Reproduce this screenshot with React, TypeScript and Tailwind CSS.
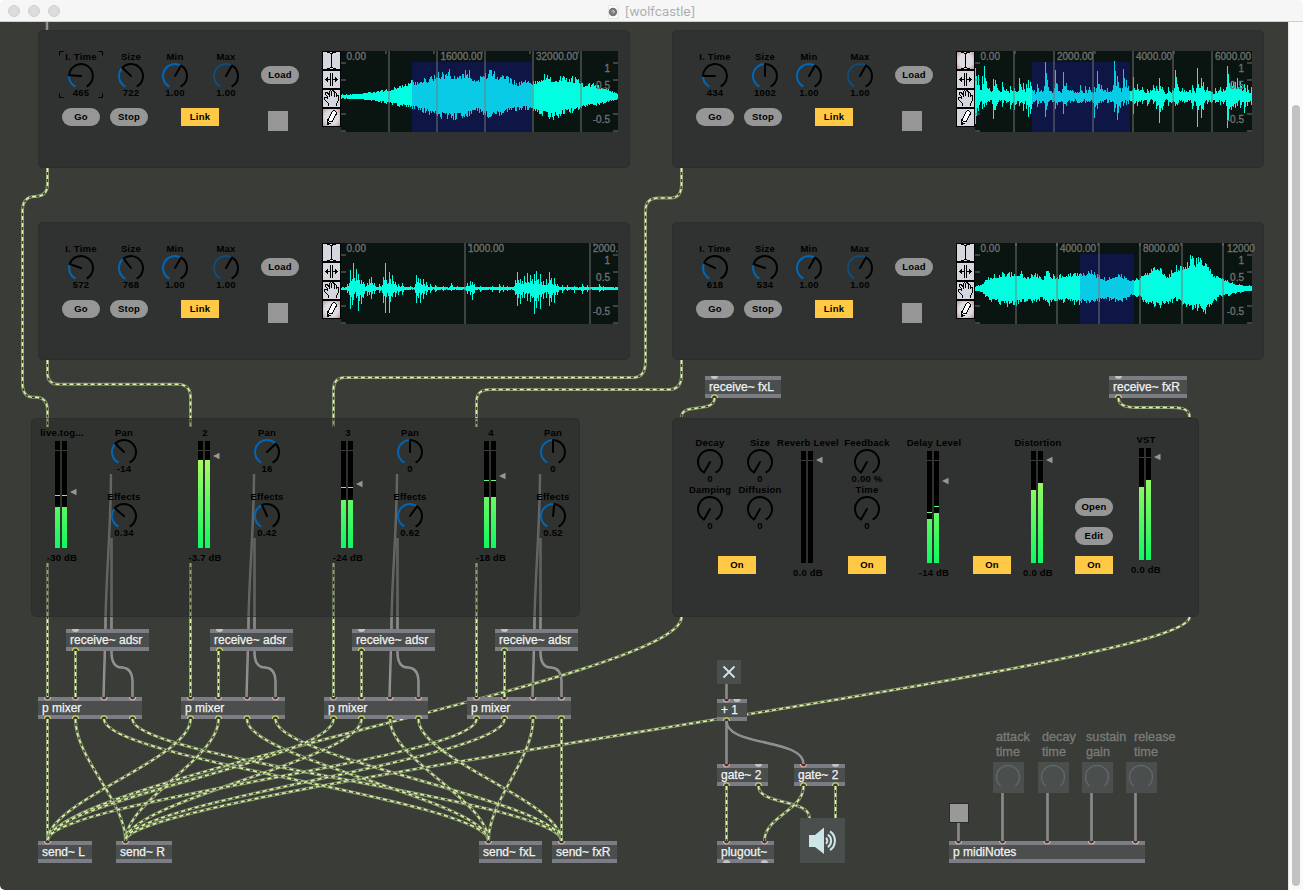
import React from "react";

const label = "font-['Liberation_Sans',Arial,sans-serif] text-[9.5px] font-bold leading-[12px] tracking-[0.22px] text-black whitespace-nowrap";

function polar(cx: number, cy: number, r: number, deg: number): [number, number] {
  const a = (deg * Math.PI) / 180;
  return [cx + r * Math.sin(a), cy - r * Math.cos(a)];
}

function arc(cx: number, cy: number, r: number, from: number, to: number) {
  const [x0, y0] = polar(cx, cy, r, from);
  const [x1, y1] = polar(cx, cy, r, to);
  return `M${x0} ${y0}A${r} ${r} 0 ${to - from > 180 ? 1 : 0} 1 ${x1} ${y1}`;
}

type DialProps = { at: string; name: string; value: string; angle: number; dim?: boolean; focus?: boolean };

function Dial({ at, name, value, angle, dim, focus }: DialProps) {
  const [nx, ny] = polar(14, 14, 12, angle);
  return (
    <div className={`absolute flex w-[60px] flex-col items-center ${label} ${at}`}>
      <span className="relative top-px">{name}</span>
      <svg width="28" height="28" viewBox="0 0 28 28" fill="none" strokeWidth="2" className="shrink-0">
        <path d={arc(14, 14, 12, Math.max(-152, angle - 2), 152)} stroke="#000" />
        {angle > -150 && <path d={arc(14, 14, 12, -152, angle)} stroke={dim ? "#0e4c7c" : "#0067b8"} />}
        <path d={`M14 14L${nx} ${ny}`} stroke="#000" strokeWidth="2" strokeLinecap="round" />
      </svg>
      <span className="-mt-[3px]">{value}</span>
      {focus && (
        <svg className="absolute left-[8px] top-px" width="44" height="47" viewBox="0 0 44 47" fill="none" stroke="#000">
          <path d="M.5 4.500V.5H4.500M39.500 .5H43.500V4.500M.5 42.500V46.500H4.500M39.500 46.500H43.500V42.500" />
        </svg>
      )}
    </div>
  );
}

function Pill({ at, children }: { at: string; children: string }) {
  return (
    <button className={`absolute flex h-[18px] w-[38px] items-center justify-center rounded-full bg-[#969696] ${label} ${at}`}>
      {children}
    </button>
  );
}

function Toggle({ at, children }: { at: string; children: string }) {
  return (
    <button className={`absolute flex h-[18px] w-[38px] items-center justify-center bg-[#ffc845] ${label} ${at}`}>
      {children}
    </button>
  );
}

type MeterProps = {
  at: string;
  name: string;
  db: string;
  height: number;
  levels?: [number, number];
  peaks?: [number, number];
  slider: number;
};

function Meter({ at, name, db, height, levels, peaks, slider }: MeterProps) {
  const id = React.useId();
  return (
    <div className={`absolute flex w-[70px] flex-col items-center ${label} ${at}`}>
      <span>{name}</span>
      <svg className="mt-[2px] shrink-0" width="70" height={height} viewBox={`0 0 70 ${height}`}>
        <defs>
          <linearGradient id={id} gradientUnits="userSpaceOnUse" x1="0" x2="0" y1="0" y2={height}>
            <stop offset="0" stopColor="#cbf962" />
            <stop offset="1" stopColor="#10f862" />
          </linearGradient>
        </defs>
        {[28, 35].map((x, i) => (
          <g key={x}>
            <rect x={x} y="0" width="5" height={height} fill="#000" />
            <rect x={x} y="9" width="5" height="1" fill="#3b3b3b" />
            {levels && <rect x={x} y={levels[i]} width="5" height={height - levels[i]} fill={`url(#${id})`} />}
            {peaks && <rect x={x} y={peaks[i]} width="5" height="1" fill="#6dfb80" />}
          </g>
        ))}
        <path d={`M43 ${slider}l6.500 -3.300v6.600z`} fill="#979797" />
      </svg>
      <span className="mt-[4px]">{db}</span>
    </div>
  );
}

/* ---------- waveform~ ---------- */

type Pt = [number, number, number];
type Wave = {
  kind: "body" | "spikes";
  base: number;
  tail: number;
  pts: Pt[];
  sel?: [number, number];
  grid: number[];
  ticks: number[];
  times: [number, string][];
};

const toPts = (o: number, raw: number[][]): Pt[] => raw.map(([x, t, b]) => [(x - o) / 3, t, b]);

const waves: Wave[] = [
  {
    kind: "body",
    base: 1,
    tail: 0,
    pts: [
      [0, 1.5, 1.5], [19, 2.5, 2.5], [36, 5, 5], [49, 7, 7], [59, 11, 10], [69, 15, 11], [79, 15, 14], [89, 19, 18],
      [97, 24, 20], [104, 24, 21], [107, 29, 21], [110, 23, 22], [116, 22, 22], [127, 25, 20], [136, 16, 15],
      [143, 22, 18], [150, 26, 21], [156, 22, 20], [162, 20, 17], [175, 14, 13], [189, 15, 12], [196, 16, 16],
      [205, 23, 20], [211, 19, 22], [222, 20, 17], [236, 18, 14], [242, 12, 11], [252, 13, 9], [262, 8, 7],
      [270, 6, 4], [277, 2, 2],
    ],
    sel: [71, 191],
    grid: [47, 95, 143, 191, 239],
    ticks: [44, 92, 140, 188, 236],
    times: [[5.5, "0.00"], [99.500, "16000.00"], [195, "32000.00"]],
  },
  {
    kind: "spikes",
    base: 5,
    tail: 2.6,
    pts: toPts(45, [
      [45, 28, 27], [55, 21, 14], [65, 20, 12], [73, 30, 10], [79, 15, 8], [88, 8, 5], [100, 17, 22], [105, 16, 13],
      [112, 8, 7], [125, 14, 10], [138, 7, 6], [150, 10, 12], [163, 8, 13], [178, 18, 9], [190, 13, 14], [197, 12, 12],
      [205, 16, 20], [211, 14, 17], [230, 12, 10], [242, 6, 6], [256, 34, 20], [262, 12, 9], [285, 26, 12],
      [292, 12, 8], [308, 24, 17], [318, 13, 9], [335, 6, 4], [360, 11, 5], [375, 10, 6], [388, 9, 5], [402, 9, 21],
      [412, 25, 12], [424, 11, 6], [440, 8, 6], [463, 35, 15], [470, 20, 23], [480, 8, 11], [490, 27, 9],
      [498, 16, 8], [504, 10, 7], [519, 19, 17], [530, 12, 9], [545, 9, 7], [560, 7, 9], [580, 11, 7], [588, 10, 12],
      [597, 18, 26], [605, 9, 13], [625, 9, 9], [645, 26, 9], [652, 12, 8], [665, 8, 5], [695, 11, 12],
      [712, 28, 30], [722, 18, 21], [730, 14, 13], [742, 9, 7], [765, 8, 6], [780, 9, 8], [790, 7, 7],
      [802, 30, 31], [808, 13, 12], [814, 15, 13], [820, 15, 10], [826, 14, 11], [832, 18, 9], [841, 14, 11],
      [852, 12, 16], [862, 11, 9], [873, 9, 8],
    ]),
    sel: [57, 155],
    grid: [38, 78, 117, 157, 197, 236],
    ticks: [39, 119, 198],
    times: [[5.5, "0.00"], [82, "2000.00"], [161, "4000.00"], [240, "6000.00"]],
  },
  {
    kind: "spikes",
    base: 1,
    tail: 1.6,
    pts: toPts(93, [
      [112, 4, 4], [120, 18, 20], [125, 9, 16], [130, 25, 11], [137, 19, 9], [145, 14, 22], [152, 8, 15], [160, 6, 9],
      [170, 5, 7], [176, 9, 6], [182, 11, 10], [192, 5, 5], [207, 4, 4], [218, 11, 14], [226, 25, 24], [237, 16, 24],
      [247, 13, 8], [255, 6, 8], [265, 4, 6], [275, 5, 6], [300, 2, 1], [319, 13, 14], [325, 10, 9], [331, 9, 14],
      [340, 9, 10], [347, 6, 6], [360, 4, 4], [375, 3, 3], [400, 2, 2], [422, 5, 2], [440, 2, 1], [471, 5, 5],
      [479, 7, 6], [485, 6, 11], [492, 4, 4], [510, 2, 3], [545, 2, 3], [568, 4, 4], [578, 3, 3], [590, 2, 2],
      [614, 8, 6], [622, 16, 17], [631, 9, 15], [637, 7, 9], [643, 12, 9], [652, 15, 12], [660, 13, 13], [666, 9, 9],
      [673, 14, 25], [678, 17, 19], [685, 9, 12], [691, 14, 20], [700, 7, 10], [708, 9, 9], [716, 16, 17],
      [724, 10, 13], [733, 10, 14], [742, 4, 6], [755, 3, 4], [770, 3, 2], [792, 2, 4], [816, 4, 5], [830, 3, 3],
      [868, 4, 3], [880, 2, 2],
    ]),
    grid: [123, 248],
    ticks: [127, 252],
    times: [[5.5, "0.00"], [127, "1000.00"], [252, "2000."]],
  },
  {
    kind: "body",
    base: 1,
    tail: 0,
    pts: toPts(45, [
      [45, 2, 2], [65, 3, 3], [75, 9, 8], [90, 12, 12], [110, 13, 14], [130, 16, 16], [160, 15, 17], [180, 17, 14],
      [200, 11, 13], [222, 16, 14], [245, 9, 11], [262, 18, 17], [275, 13, 14], [290, 12, 13], [320, 15, 13],
      [350, 16, 16], [362, 14, 14], [386, 20, 16], [410, 13, 13], [440, 9, 10], [475, 16, 14], [495, 11, 11],
      [515, 9, 6], [540, 11, 9], [560, 16, 16], [595, 24, 18], [620, 12, 16], [645, 21, 11], [670, 25, 17],
      [684, 27, 20], [694, 36, 21], [700, 27, 22], [718, 36, 20], [735, 26, 24], [755, 16, 16], [775, 11, 9],
      [800, 8, 7], [830, 4, 4], [875, 2, 2],
    ]),
    sel: [105, 159],
    grid: [40, 81, 123, 164, 206, 247],
    ticks: [40, 81, 122, 164, 205, 247],
    times: [[5.5, "0.00"], [85, "4000.00"], [168, "8000.00"], [252, "12000"]],
  },
];

function wavePath(w: Wave, seed: number) {
  let s = seed;
  const rnd = () => {
    s = (s * 16807) % 2147483647;
    return s / 2147483647;
  };
  const w0 = 277;
  const top = new Array(w0).fill(0);
  const bot = new Array(w0).fill(0);
  if (w.kind === "body") {
    for (let x = 0; x < w0; x++) {
      let i = 0;
      while (i < w.pts.length - 2 && w.pts[i + 1][0] < x) i++;
      const [a, t0, b0] = w.pts[i];
      const [b, t1, b1] = w.pts[i + 1];
      const k = Math.min(1, Math.max(0, (x - a) / (b - a)));
      top[x] = (t0 + (t1 - t0) * k) * (0.72 + 0.36 * rnd() ** 1.6);
      bot[x] = (b0 + (b1 - b0) * k) * (0.72 + 0.36 * rnd() ** 1.6);
    }
  } else {
    for (let x = 0; x < w0; x++) {
      top[x] = w.base * (0.4 + 0.8 * rnd());
      bot[x] = w.base * (0.4 + 0.8 * rnd());
    }
    w.pts.forEach(([px, t, b]) => {
      const p = Math.round(px);
      for (let x = Math.max(0, p - 1); x < Math.min(w0, p + 6); x++) {
        const d = x === p ? 1 : x < p ? 0.3 : Math.exp(-(x - p) / w.tail) * (0.6 + 0.5 * rnd());
        top[x] = Math.max(top[x], t * d);
        bot[x] = Math.max(bot[x], b * d);
      }
    });
  }
  let d = "";
  for (let x = 0; x < w0; x++) {
    const y0 = 45 - Math.round(top[x]);
    const y1 = 46 + Math.round(bot[x]);
    d += `M${x} ${y0}h1V${y1}h-1z`;
  }
  return d;
}

const paths = waves.map((w, i) => wavePath(w, 4211 + i * 977));

function Waveform({ index }: { index: number }) {
  const w = waves[index];
  return (
    <svg
      className="block overflow-visible font-['Liberation_Sans',Arial,sans-serif] text-[10px]"
      width="281"
      height="81"
      viewBox="0 0 281 81"
      shapeRendering="crispEdges"
    >
      <rect width="277" height="81" fill="#0a1511" />
      {w.sel && <rect x={w.sel[0]} y="11" width={w.sel[1] - w.sel[0]} height="70" fill="#0d1644" />}
      <path d={paths[index]} fill="#00ffe1" />
      {w.sel && (
        <svg x={w.sel[0]} y="11" width={w.sel[1] - w.sel[0]} height="70" viewBox={`${w.sel[0]} 11 ${w.sel[1] - w.sel[0]} 70`}>
          <path d={paths[index]} fill="#09cbe6" />
        </svg>
      )}
      <g fill="#787878" fillOpacity="0.48">
        {w.grid.map((x) => (
          <rect key={x} x={x} y="0" width="2" height="81" />
        ))}
        {w.ticks.map((x) => (
          <rect key={x} x={x} y="0" width="2" height="3" />
        ))}
        {[11, 28, 62, 79].map((y) => (
          <g key={y}>
            <rect x="0" y={y} width="5" height="2" />
            <rect x="272" y={y} width="5" height="2" />
          </g>
        ))}
      </g>
      <g fill="#6e706e" stroke="#6e706e" strokeWidth="0.35">
        {w.times.map(([x, t]) => (
          <text key={t} x={x} y="9">
            {t}
          </text>
        ))}
        <g textAnchor="end">
          <text x="269" y="21">1</text>
          <text x="269" y="38">0.5</text>
          <text x="269" y="72">-0.5</text>
        </g>
      </g>
    </svg>
  );
}

const toolIcons = [
  <path key="i" fill="none" stroke="#000" d="M5 1.500H8M8 2.500H9M12 1.500H9.500M9.500 2V17M5 17.500H8M8 16.500H11M11 17.500H14M11 1.500H14M10 2.500H11" />,
  <path key="a" fill="none" stroke="#000" d="M8.500 3V16M10.500 3V16M3 9.500H8M11 9.500H16M4.500 8V11M5.500 7V12M14.500 8V11M13.500 7V12" />,
  <path
    key="h"
    fill="none"
    stroke="#000"
    d="M6.500 17V14.500L2.500 10.500V8.500H4.500L5.500 9.500V7.500L3.500 5.500V3.500H5.500L7.500 7V2.500L8.500 1.500L9.500 2.500V7M9.500 2.500L10.500 1.500L12.500 2.500V7.500M12.500 4.500L13.500 3.500L14.500 4.500V8M14.500 6.500H16.500V11.500L14.500 14.500V17"
  />,
  <path key="p" fill="#fff" stroke="#000" d="M10.500 3.500L11.500 2.500H12.500L14.500 4.500V5.500L9.500 14.500L6.500 16.500H5.500V12.500ZM6.500 12.500L9.500 14.500M5.500 14.500H6.500V15.500" />,
];

function Tools({ active }: { active: number }) {
  return (
    <div className="flex h-[76px] w-[19px] flex-col">
      {toolIcons.map((icon, i) => (
        <div
          key={i}
          className={
            i === active
              ? "size-[19px] bg-[radial-gradient(circle,#dcdce2_50%,#c48f8f_90%)]"
              : "size-[19px] bg-[#d6d6de]"
          }
        >
          <svg width="19" height="19" viewBox="0 0 19 19" shapeRendering="crispEdges" className="block">
            {icon}
            <rect x="0.500" y="0.500" width="18" height="18" fill="none" stroke="#000" />
          </svg>
        </div>
      ))}
    </div>
  );
}

type GrainProps = { at: string; index: number; time: [string, number]; size: [string, number]; tool: number; focus?: boolean };

function Grain({ at, index, time, size, tool, focus }: GrainProps) {
  return (
    <section className={`absolute h-[138px] w-[592px] rounded-[5px] border border-[#2c2e2d] bg-[#303231] ${at}`}>
      <div className="absolute -inset-px">
        <Dial at="left-[13px] top-[20px]" name="I. Time" value={time[0]} angle={time[1]} focus={focus} />
        <Dial at="left-[63px] top-[20px]" name="Size" value={size[0]} angle={size[1]} />
        <Dial at="left-[107px] top-[20px]" name="Min" value="1.00" angle={30} />
        <Dial at="left-[158px] top-[20px]" name="Max" value="1.00" angle={30} dim />
        <Pill at="left-[223px] top-[36px]">Load</Pill>
        <Pill at="left-[24px] top-[78px]">Go</Pill>
        <Pill at="left-[72px] top-[78px]">Stop</Pill>
        <Toggle at="left-[143px] top-[78px]">Link</Toggle>
        <button className="absolute left-[230px] top-[81px] size-[20px] bg-[#969696]" />
        <div className="absolute left-[284px] top-[21px] flex">
          <Tools active={tool} />
          <Waveform index={index} />
        </div>
      </div>
    </section>
  );
}

/* ---------- patch objects ---------- */

type ObjProps = { at: string; width: number; text: string; ins?: number[]; idleIns?: number[]; outs?: number[]; idleOuts?: number[] };

function Obj({ at, width, text, ins = [], idleIns = [], outs = [], idleOuts = [] }: ObjProps) {
  return (
    <div
      className={`absolute h-[22px] border-y-4 border-[#7c7d84] bg-[#4a4e4d] pl-1 font-['Liberation_Sans',Arial,sans-serif] text-[12px] leading-[14px] whitespace-nowrap text-[#f2f2f2] [-webkit-text-stroke:0.25px_#f2f2f2] ${at}`}
    >
      {text}
      <svg className="absolute left-0 -top-1" width={width} height="22" viewBox={`0 0 ${width} 22`}>
        {ins.map((x) => (
          <path key={x} d={`M${x - 3} 0A3 3 0 0 0 ${x + 3} 0`} fill="#3a3b38" stroke="#e9a9a0" strokeWidth="1.200" />
        ))}
        {idleIns.map((x) => (
          <path key={x} d={`M${x - 3.500} 0A3.500 3 0 0 0 ${x + 3.500} 0z`} fill="#c4c4c4" />
        ))}
        {outs.map((x) => (
          <path key={x} d={`M${x - 3} 22A3 3.200 0 0 1 ${x + 3} 22`} fill="#3a3b38" stroke="#c9d563" strokeWidth="1.200" />
        ))}
        {idleOuts.map((x) => (
          <path key={x} d={`M${x - 3.500} 22A3.500 3 0 0 1 ${x + 3.500} 22z`} fill="#c4c4c4" />
        ))}
      </svg>
    </div>
  );
}

function Knob({ at }: { at: string }) {
  return (
    <svg className={`absolute ${at}`} width="31" height="31" viewBox="0 0 31 31" fill="none">
      <rect width="31" height="31" fill="#4a4e4d" />
      <path d={arc(15, 15, 11.5, -140, 140)} stroke="#606568" strokeWidth="1.500" />
    </svg>
  );
}

function Comment({ at, children }: { at: string; children: React.ReactNode }) {
  return (
    <p className={`absolute font-['Liberation_Sans',Arial,sans-serif] text-[12.7px] leading-[15px] whitespace-nowrap text-[#7b7c79] [-webkit-text-stroke:0.3px_#7b7c79] ${at}`}>
      {children}
    </p>
  );
}

/* ---------- patch cords ---------- */

function hang(x0: number, y0: number, x1: number, y1: number, k = 0.33) {
  const dy = (y1 - y0) * k;
  return `M${x0} ${y0}C${x0} ${y0 + dy} ${x1} ${y1 - dy} ${x1} ${y1}`;
}

const strips = [0, 143, 286, 429];

const signals: string[] = [
  "M47.500 168V184C47.500 192 44 196 36 196.500H34C26 197 22.500 202 22.500 211V383C22.500 392 26 397.300 33 397.300H36C44 397.500 47.500 402 47.500 411V427",
  "M47.500 360V373C47.500 380 51 384.300 58 384.300H178C186 384.300 190.500 389 190.500 397V427",
  "M681.500 168V184C681.500 193 678 198 671 198H658C650 198 645.500 202 645.500 211V361C645.500 371 642 377.400 634 377.400H345C338 377.400 333.500 381 333.500 390V427",
  "M681.500 360V375C681.500 384 678 389.400 669 389.400H490C481 389.400 476.500 393 476.500 402V427",
  "M714.500 398C714.500 414 681.500 402 681.500 417",
  "M1118.500 398C1118.500 405 1125 407.500 1136 407.500H1165C1180 407 1189.500 408 1189.500 417",
  ...strips.map((o) => `M${47.5 + o} 563V697`),
  "M75.500 651V697",
  "M218.500 651V697",
  "M361.500 651V697",
  "M504.500 651V697",
  hang(681.5, 617, 47.5, 841, 0.27),
  hang(1189.5, 617, 125.5, 841, 0.23),
  ...strips.flatMap((o) => [
    hang(47.5 + o, 719, 47.5, 841),
    hang(75.5 + o, 719, 125.5, 841),
    hang(104 + o, 719, 488.5, 841),
    hang(132.5 + o, 719, 561.5, 841),
  ]),
  "M726.500 786V841",
  hang(758.5, 786, 809.5, 818, 0.6),
  hang(803.5, 786, 764.5, 841, 0.45),
  "M835.500 786V818",
];

const controls: string[] = [
  "M47 22V30",
  ...strips.flatMap((o) => [
    `M${111 + o} 474C${111 + o} 530 ${105 + o} 590 ${105.5 + o} 629L${103.5 + o} 697`,
    `M${111.5 + o} 538V652C${111.5 + o} 662 ${115 + o} 667.500 ${122 + o} 667.500C${129 + o} 668 ${132.5 + o} 673 ${132.5 + o} 682V697`,
  ]),
  "M726.500 684V699",
  "M726.500 721V764",
  hang(726.5, 721, 803.5, 764, 0.6),
  "M958.500 823V841",
  "M1002.500 793V841",
  "M1047.500 793V841",
  "M1091.500 793V841",
  "M1135.500 793V841",
];

function Cords() {
  return (
    <svg className="absolute inset-0" width="1288" height="868" viewBox="0 22 1288 868" fill="none">
      {controls.map((d, i) => (
        <g key={i}>
          <path d={d} stroke="#999" strokeWidth="2.400" />
          <path d={d} stroke="#858585" strokeWidth="0.800" />
        </g>
      ))}
      {signals.map((d, i) => (
        <g key={i}>
          <path d={d} stroke="#8b9876" strokeWidth="3" />
          <path d={d} stroke="#383b2c" strokeWidth="1.200" />
          <path d={d} stroke="#d7fa9c" strokeWidth="1.500" strokeDasharray="4 3" />
        </g>
      ))}
    </svg>
  );
}

function MixerPanel() {
  return (
    <section className="absolute left-[31px] top-[396px] h-[199px] w-[549px] rounded-[5px] border border-[#2c2e2d]/60 bg-[#212424]/40">
      <div className="absolute -inset-px">
        <Meter at="left-[-4px] top-[9px]" name="live.tog..." db="-30 dB" height={107} levels={[66, 66]} peaks={[54, 54]} slider={51} />
        <Meter at="left-[139px] top-[9px]" name="2" db="-3.7 dB" height={107} levels={[19, 19]} slider={15} />
        <Meter at="left-[282px] top-[9px]" name="3" db="-24 dB" height={107} levels={[59, 59]} peaks={[46, 46]} slider={43} />
        <Meter at="left-[425px] top-[9px]" name="4" db="-18 dB" height={107} levels={[56, 56]} peaks={[39, 39]} slider={35} />
        <Dial at="left-[63px] top-[8px]" name="Pan" value="-14" angle={-46} />
        <Dial at="left-[206px] top-[8px]" name="Pan" value="16" angle={47} />
        <Dial at="left-[349px] top-[8px]" name="Pan" value="0" angle={0} />
        <Dial at="left-[492px] top-[8px]" name="Pan" value="0" angle={0} />
        <Dial at="left-[63px] top-[72px]" name="Effects" value="0.34" angle={-50} />
        <Dial at="left-[206px] top-[72px]" name="Effects" value="0.42" angle={-24} />
        <Dial at="left-[349px] top-[72px]" name="Effects" value="0.62" angle={36} />
        <Dial at="left-[492px] top-[72px]" name="Effects" value="0.52" angle={6} />
      </div>
    </section>
  );
}

function EffectsPanel() {
  return (
    <section className="absolute left-[672px] top-[396px] h-[199px] w-[527px] rounded-[5px] border border-[#2c2e2d] bg-[#303231]">
      <div className="absolute -inset-px">
        <Dial at="left-[8px] top-[18px]" name="Decay" value="0" angle={-150} />
        <Dial at="left-[58px] top-[18px]" name="Size" value="0" angle={-150} />
        <Dial at="left-[8px] top-[65px]" name="Damping" value="0" angle={-150} />
        <Dial at="left-[58px] top-[65px]" name="Diffusion" value="0" angle={-150} />
        <Meter at="left-[101px] top-[19px]" name="Reverb Level" db="0.0 dB" height={112} slider={9} />
        <Dial at="left-[165px] top-[18px]" name="Feedback" value="0.00 %" angle={-150} />
        <Dial at="left-[165px] top-[65px]" name="Time" value="0" angle={-150} />
        <Meter at="left-[227px] top-[19px]" name="Delay Level" db="-14 dB" height={112} levels={[68, 62]} peaks={[61, 55]} slider={30} />
        <Meter at="left-[331px] top-[19px]" name="Distortion" db="0.0 dB" height={112} levels={[39, 32]} slider={9} />
        <Meter at="left-[439px] top-[16px]" name="VST" db="0.0 dB" height={112} levels={[39, 32]} slider={9} />
        <Pill at="left-[403px] top-[80px]">Open</Pill>
        <Pill at="left-[403px] top-[109px]">Edit</Pill>
        <Toggle at="left-[46px] top-[138px]">On</Toggle>
        <Toggle at="left-[176px] top-[138px]">On</Toggle>
        <Toggle at="left-[301px] top-[138px]">On</Toggle>
        <Toggle at="left-[403px] top-[138px]">On</Toggle>
      </div>
    </section>
  );
}

function TitleBar() {
  return (
    <header className="relative flex h-[22px] shrink-0 items-center justify-center rounded-t-[5px] border-b border-[#cfcfcf] bg-[#f6f6f6] pt-[3px] pr-[2px]">
      <div className="absolute left-[8px] top-[5px] flex gap-2">
        <span className="size-3 rounded-full border border-[#cfcfcf] bg-[#dcdcdc]" />
        <span className="size-3 rounded-full border border-[#cfcfcf] bg-[#dcdcdc]" />
        <span className="size-3 rounded-full border border-[#cfcfcf] bg-[#dcdcdc]" />
      </div>
      <svg width="14" height="14" viewBox="0 0 14 14" className="mr-[5px] -mt-px">
        <path d="M2.500 .5H9L12 3.500V13.500H2.500z" fill="#fff" stroke="#dedede" strokeWidth="0.800" />
        <circle cx="7" cy="7" r="4.200" fill="#777" />
        <path d="M5.500 6.500Q7 4.500 8.500 6.500L7 8.500" fill="none" stroke="#ddd" />
      </svg>
      <h1 className="font-[Inter,'Liberation_Sans',sans-serif] text-[12.8px] leading-none text-[#adadad]">[wolfcastle]</h1>
    </header>
  );
}

export default function App() {
  return (
    <div className="flex h-[890px] w-[1303px] flex-col overflow-hidden bg-white">
      <TitleBar />
      <div className="flex min-h-0 flex-1">
        <main className="relative w-[1288px] overflow-hidden rounded-bl-[5px] bg-[#3a3c38]">
          <Cords />
          <Grain at="left-[38px] top-[8px]" index={0} time={["465", -87]} size={["722", -46]} tool={3} focus />
          <Grain at="left-[672px] top-[8px]" index={1} time={["434", -90]} size={["1002", 0]} tool={0} />
          <Grain at="left-[38px] top-[200px]" index={2} time={["572", -71]} size={["768", -38]} tool={3} />
          <Grain at="left-[672px] top-[200px]" index={3} time={["618", -65]} size={["534", -72]} tool={3} />
          <MixerPanel />
          <EffectsPanel />

          <Obj at="left-[705px] top-[354px] w-[76px]" width={76} text="receive~ fxL" idleIns={[9.5]} outs={[9.5]} />
          <Obj at="left-[1109px] top-[354px] w-[78px]" width={78} text="receive~ fxR" idleIns={[9.5]} outs={[9.5]} />

          <Obj at="left-[66px] top-[607px] w-[83px]" width={83} text="receive~ adsr" idleIns={[9.5]} outs={[9.5]} />
          <Obj at="left-[210px] top-[607px] w-[83px]" width={83} text="receive~ adsr" idleIns={[9.5]} outs={[9.5]} />
          <Obj at="left-[352px] top-[607px] w-[83px]" width={83} text="receive~ adsr" idleIns={[9.5]} outs={[9.5]} />
          <Obj at="left-[495px] top-[607px] w-[83px]" width={83} text="receive~ adsr" idleIns={[9.5]} outs={[9.5]} />

          <Obj at="left-[38px] top-[675px] w-[104px]" width={104} text="p mixer" ins={[9.5, 37.5, 66, 94.5]} outs={[9.5, 37.5, 66, 94.5]} />
          <Obj at="left-[181px] top-[675px] w-[104px]" width={104} text="p mixer" ins={[9.5, 37.5, 66, 94.5]} outs={[9.5, 37.5, 66, 94.5]} />
          <Obj at="left-[324px] top-[675px] w-[104px]" width={104} text="p mixer" ins={[9.5, 37.5, 66, 94.5]} outs={[9.5, 37.5, 66, 94.5]} />
          <Obj at="left-[467px] top-[675px] w-[104px]" width={104} text="p mixer" ins={[9.5, 37.5, 66, 94.5]} outs={[9.5, 37.5, 66, 94.5]} />

          <Obj at="left-[38px] top-[819px] w-[54px]" width={54} text="send~ L" ins={[9.5]} />
          <Obj at="left-[116px] top-[819px] w-[56px]" width={56} text="send~ R" ins={[9.5]} />
          <Obj at="left-[479px] top-[819px] w-[63px]" width={63} text="send~ fxL" ins={[9.5]} />
          <Obj at="left-[552px] top-[819px] w-[65px]" width={65} text="send~ fxR" ins={[9.5]} />

          <svg className="absolute left-[717px] top-[638px]" width="24" height="24" viewBox="0 0 24 24">
            <rect width="24" height="24" fill="#4a4e4d" />
            <path d="M6.500 6.500L17.500 17.500M17.500 6.500L6.500 17.500" stroke="#cee5e8" strokeWidth="1.800" />
          </svg>
          <Obj at="left-[717px] top-[677px] w-[30px]" width={30} text="+ 1" ins={[9.5]} idleIns={[20]} outs={[9.5]} />
          <Obj at="left-[717px] top-[742px] w-[51px]" width={51} text="gate~ 2" ins={[9.5]} idleIns={[41.5]} outs={[9.5, 41.5]} />
          <Obj at="left-[794px] top-[742px] w-[51px]" width={51} text="gate~ 2" ins={[9.5]} idleIns={[41.5]} outs={[9.5, 41.5]} />
          <Obj at="left-[717px] top-[819px] w-[57px]" width={57} text="plugout~" ins={[9.5, 47.5]} idleOuts={[9.5, 47.5]} />
          <svg className="absolute left-[800px] top-[796px]" width="45" height="45" viewBox="0 0 45 45" fill="none">
            <rect width="45" height="45" fill="#4a4e4d" />
            <path d="M9 17H15L24 9.500V36L15 29H9z" fill="#cee5e8" />
            <g stroke="#cee5e8" strokeWidth="2.100">
              <path d={arc(23.5, 22.8, 3.8, 40, 140)} />
              <path d={arc(23.5, 22.8, 7.6, 35, 145)} />
              <path d={arc(23.5, 22.8, 11.4, 35, 145)} />
            </g>
          </svg>

          <Comment at="left-[996px] top-[708px]">attack<br />time</Comment>
          <Comment at="left-[1042px] top-[708px]">decay<br />time</Comment>
          <Comment at="left-[1086px] top-[708px]">sustain<br />gain</Comment>
          <Comment at="left-[1134px] top-[708px]">release<br />time</Comment>
          <Knob at="left-[993px] top-[740px]" />
          <Knob at="left-[1038px] top-[740px]" />
          <Knob at="left-[1082px] top-[740px]" />
          <Knob at="left-[1126px] top-[740px]" />
          <button className="absolute left-[949px] top-[781px] size-[20px] border border-[#2b2c2a] bg-[#999]" />
          <Obj at="left-[949px] top-[819px] w-[196px]" width={196} text="p midiNotes" ins={[9.5, 53.5, 98, 142.5, 186.5]} />
        </main>
        <aside className="flex w-[15px] justify-center border-l border-[#e8e8e8] bg-[#fafafa] pt-[83px] pb-[4px]">
          <div className="w-[8px] rounded-full bg-[#c2c2c2]" />
        </aside>
      </div>
    </div>
  );
}
